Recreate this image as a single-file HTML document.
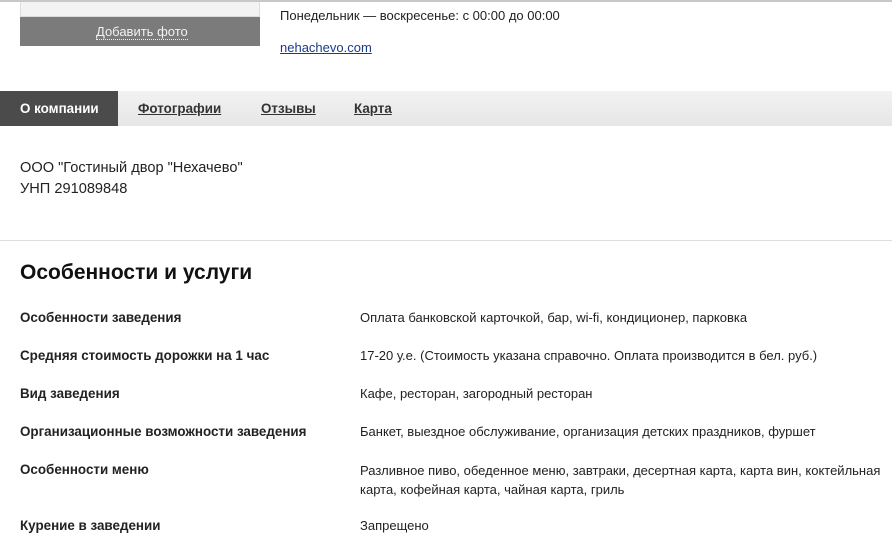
<!DOCTYPE html>
<html><head><meta charset="utf-8"><style>
*{margin:0;padding:0;box-sizing:border-box}
body{width:892px;height:556px;overflow:hidden;background:#fff;font-family:"Liberation Sans",Arial,sans-serif;color:#222;position:relative;font-size:13px}
.abs{position:absolute;white-space:nowrap}
.b{font-weight:bold;font-size:13.4px}
</style></head><body>
<div class="abs" style="left:0;top:0;width:892px;height:2px;background:#c8c8c8"></div>
<div class="abs" style="left:20px;top:2px;width:240px;height:15px;background:#f3f3f3;border:1px solid #ddd;border-top:none"></div>
<div class="abs" style="left:20px;top:17px;width:240px;height:29px;background:#7b7b7b"></div>
<div class="abs" style="left:96px;top:24px;color:#f2f2f2;font-size:13px;border-bottom:1px dotted #eee;line-height:15px">Добавить фото</div>
<div class="abs" style="left:280px;top:8px;font-size:13px">Понедельник — воскресенье: с 00:00 до 00:00</div>
<div class="abs" style="left:280px;top:40px;font-size:13px;color:#1a3a8a;text-decoration:underline">nehachevo.com</div>
<div class="abs" style="left:0;top:91px;width:892px;height:35px;background:linear-gradient(#f2f2f2,#e6e6e6)"></div>
<div class="abs" style="left:0;top:91px;width:118px;height:35px;background:#4b4b4b"></div>
<div class="abs b" style="left:20px;top:101px;color:#fff">О компании</div>
<div class="abs b" style="left:138px;top:101px;text-decoration:underline;color:#333">Фотографии</div>
<div class="abs b" style="left:261px;top:101px;text-decoration:underline;color:#333">Отзывы</div>
<div class="abs b" style="left:354px;top:101px;text-decoration:underline;color:#333">Карта</div>
<div class="abs" style="left:20px;top:158px;font-size:14.6px;line-height:21px">ООО "Гостиный двор "Нехачево"<br>УНП 291089848</div>
<div class="abs" style="left:0;top:240px;width:892px;height:1px;background:#ddd"></div>
<div class="abs" style="left:20px;top:261px;font-size:21px;font-weight:bold;color:#111">Особенности и услуги</div>
<div class="abs b" style="left:20px;top:310px">Особенности заведения</div>
<div class="abs" style="left:360px;top:310px">Оплата банковской карточкой, бар, wi-fi, кондиционер, парковка</div>
<div class="abs b" style="left:20px;top:348px">Средняя стоимость дорожки на 1 час</div>
<div class="abs" style="left:360px;top:348px">17-20 у.е. (Стоимость указана справочно. Оплата производится в бел. руб.)</div>
<div class="abs b" style="left:20px;top:386px">Вид заведения</div>
<div class="abs" style="left:360px;top:386px">Кафе, ресторан, загородный ресторан</div>
<div class="abs b" style="left:20px;top:424px">Организационные возможности заведения</div>
<div class="abs" style="left:360px;top:424px">Банкет, выездное обслуживание, организация детских праздников, фуршет</div>
<div class="abs b" style="left:20px;top:462px">Особенности меню</div>
<div class="abs" style="left:360px;top:461px;line-height:19px">Разливное пиво, обеденное меню, завтраки, десертная карта, карта вин, коктейльная<br>карта, кофейная карта, чайная карта, гриль</div>
<div class="abs b" style="left:20px;top:518px">Курение в заведении</div>
<div class="abs" style="left:360px;top:518px">Запрещено</div>
</body></html>
